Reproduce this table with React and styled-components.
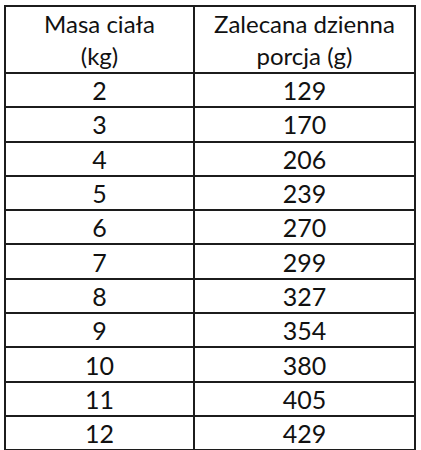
import React from "react";
import styled, { createGlobalStyle } from "styled-components";

const rows = [
  [2, 129],
  [3, 170],
  [4, 206],
  [5, 239],
  [6, 270],
  [7, 299],
  [8, 327],
  [9, 354],
  [10, 380],
  [11, 405],
  [12, 429],
];

const GlobalStyle = createGlobalStyle`
  html, body {
    margin: 0;
    padding: 0;
    background: #ffffff;
  }
  body {
    font-family: Lato, "Open Sans", sans-serif;
    color: #111;
  }
`;

const Page = styled.div`
  padding: 5px 0 0 4px;
`;

const Table = styled.table`
  width: 412px;
  border-collapse: collapse;
  table-layout: fixed;
  border: 2px solid #1c1c1c;
`;

const HeadCell = styled.th`
  width: ${(p) => p.width || "auto"};
  height: 65px;
  padding: 0;
  font-weight: normal;
  font-size: 24px;
  line-height: 32px;
  text-align: center;
  vertical-align: middle;
  border: 2px solid #1c1c1c;
`;

const Cell = styled.td`
  height: 32.3px;
  padding: 0;
  font-size: 25px;
  line-height: 30px;
  text-align: center;
  vertical-align: middle;
  border: 2px solid #1c1c1c;
`;

function App() {
  return (
    <Page>
      <GlobalStyle />
      <Table>
        <thead>
          <tr>
            <HeadCell width="187px">
              Masa ciała
              <br />
              (kg)
            </HeadCell>
            <HeadCell>
              Zalecana dzienna
              <br />
              porcja (g)
            </HeadCell>
          </tr>
        </thead>
        <tbody>
          {rows.map(([mass, portion]) => (
            <tr key={mass}>
              <Cell>{mass}</Cell>
              <Cell>{portion}</Cell>
            </tr>
          ))}
        </tbody>
      </Table>
    </Page>
  );
}

export default App;
